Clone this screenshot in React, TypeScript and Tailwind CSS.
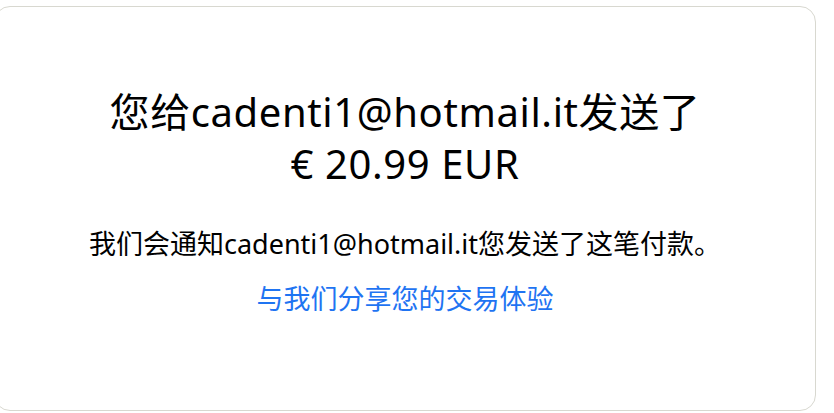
import React from "react";

export default function App() {
  const font = {
    fontFamily: '"Noto Sans", "Noto Sans CJK SC", sans-serif',
  };
  return (
    <div className="w-[834px] h-[413px] bg-white overflow-hidden pt-[6px]">
      <div
        className="ml-[-6px] w-[822px] h-[405px] border border-[#d8d8d0] rounded-[16px] flex flex-col items-center pt-[79px] text-center"
        style={font}
      >
        <h1 className="text-[40px] tracking-[0.6px] leading-[52px] text-black font-normal">
          您给cadenti1@hotmail.it发送了
          <br />€ 20.99 EUR
        </h1>
        <p className="mt-[37px] text-[27px] leading-[34px] text-black">
          我们会通知cadenti1@hotmail.it您发送了这笔付款。
        </p>
        <a className="mt-[20px] text-[27px] leading-[36px] text-[#1f74f2]">
          与我们分享您的交易体验
        </a>
      </div>
    </div>
  );
}
